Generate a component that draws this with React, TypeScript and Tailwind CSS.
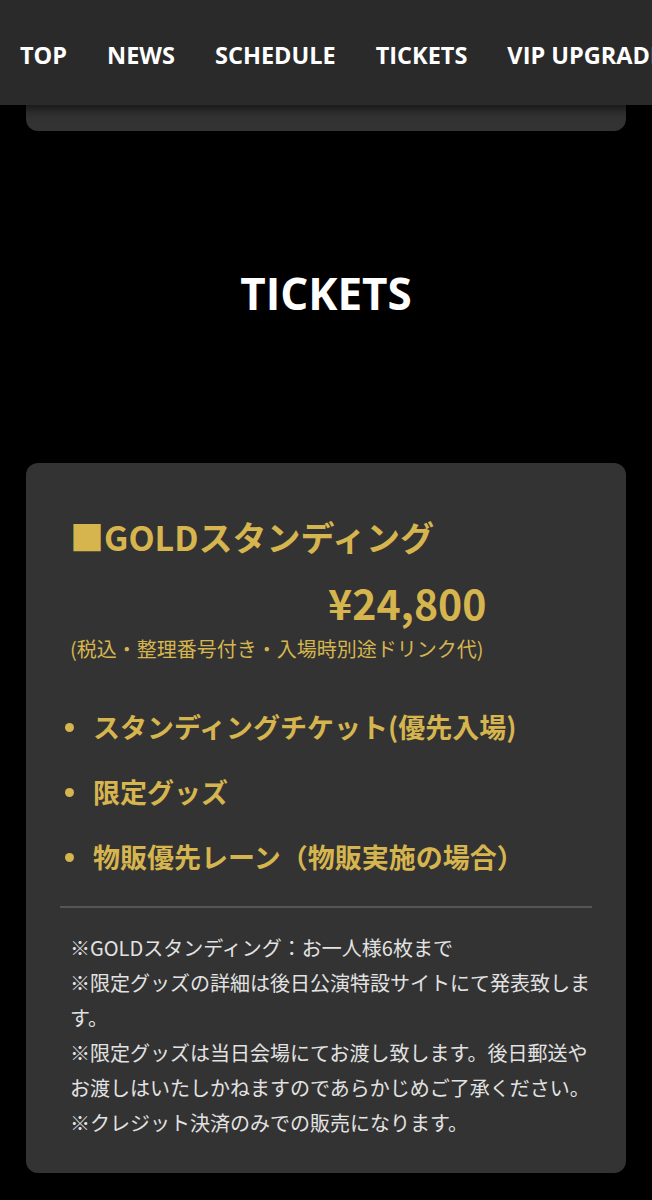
const navItems = ['TOP', 'NEWS', 'SCHEDULE', 'TICKETS', 'VIP UPGRADE'];

const perks = ['スタンディングチケット(優先入場)', '限定グッズ', '物販優先レーン（物販実施の場合）'];

const notes = [
  '※GOLDスタンディング：お一人様6枚まで',
  '※限定グッズの詳細は後日公演特設サイトにて発表致します。',
  '※限定グッズは当日会場にてお渡し致します。後日郵送やお渡しはいたしかねますのであらかじめご了承ください。',
  '※クレジット決済のみでの販売になります。',
];

const jp = "font-['Noto_Sans_CJK_JP','Noto_Sans',sans-serif]";

export default function App() {
  return (
    <div className="min-h-[1200px] bg-black overflow-hidden">
      <header className="sticky top-0 z-10 h-[105px] bg-[#2a2a2a] shadow-[0_4px_10px_rgba(0,0,0,0.6)] flex items-center pt-[6px] overflow-hidden">
        <nav className="flex gap-[40px] pl-[20px] whitespace-nowrap">
          {navItems.map((item) => (
            <span
              key={item}
              className="font-['Open_Sans',sans-serif] font-bold text-[23.5px] text-white"
            >
              {item}
            </span>
          ))}
        </nav>
      </header>

      <div className="mx-[26px] -mt-[40px] h-[66px] rounded-[12px] bg-[#333333]" />

      <h2 className="mt-[134px] text-center font-['Open_Sans',sans-serif] font-bold text-[44px] leading-[56px] text-white">
        TICKETS
      </h2>

      <section className={`mx-[26px] mt-[142px] rounded-[12px] bg-[#333333] px-[34px] pt-[52px] pb-[33px] ${jp}`}>
        <div className="px-[10px] text-[#d6b54f]">
          <h3 className="font-bold text-[34px] leading-[44px]">■GOLDスタンディング</h3>
          <p className="mt-[19px] pl-[258px] font-bold text-[41px] leading-[48px]">¥24,800</p>
          <p className="mt-[8px] text-[20px] leading-[30px]">(税込・整理番号付き・入場時別途ドリンク代)</p>

          <ul className="mt-[44px] flex flex-col gap-[27px] pb-[30px]">
            {perks.map((p) => (
              <li key={p} className="flex items-center font-bold text-[27px] leading-[38px]">
                <span className="-ml-[5px] mr-[19px] h-[9px] w-[9px] shrink-0 rounded-full bg-[#d6b54f]" />
                {p}
              </li>
            ))}
          </ul>
        </div>

        <div className="h-[2px] bg-[#555555]" />

        <div className="mt-[22px] pl-[10px] text-[20px] leading-[35px] text-[#e2e2e2]">
          {notes.map((n) => (
            <p key={n}>{n}</p>
          ))}
        </div>
      </section>
    </div>
  );
}
